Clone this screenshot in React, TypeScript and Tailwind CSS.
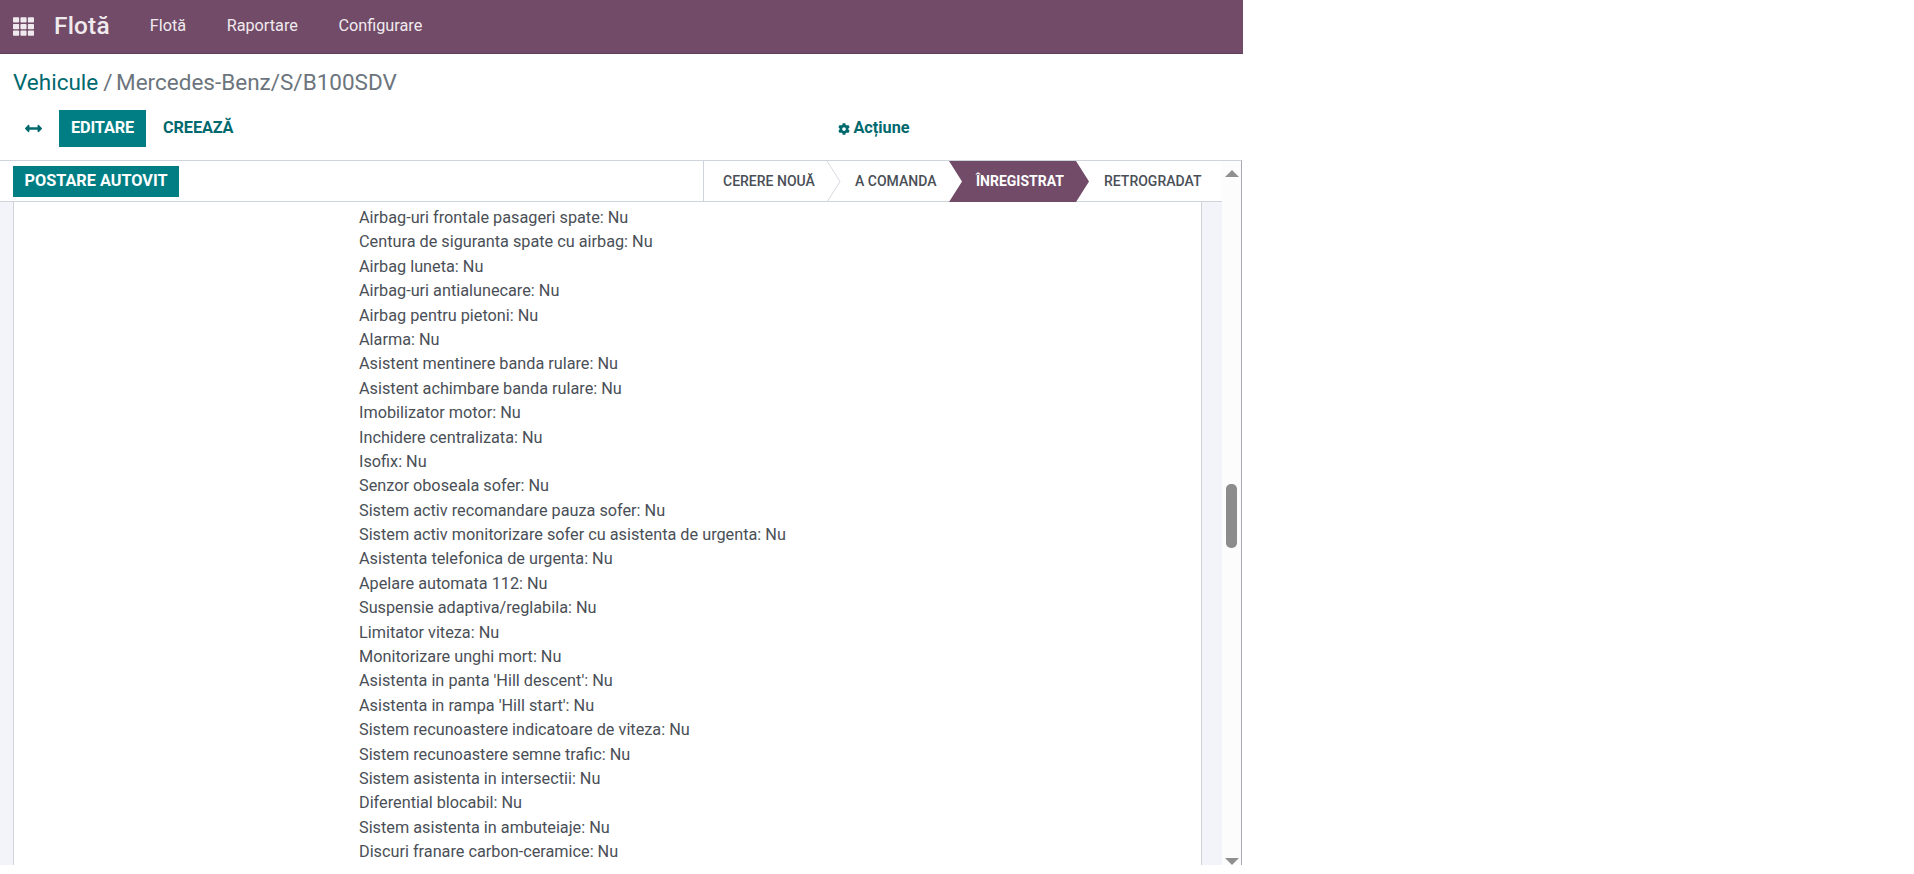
import { FaArrowsAltH, FaCog, FaTh } from "react-icons/fa";

const rows = [
  "Airbag-uri frontale pasageri spate: Nu",
  "Centura de siguranta spate cu airbag: Nu",
  "Airbag luneta: Nu",
  "Airbag-uri antialunecare: Nu",
  "Airbag pentru pietoni: Nu",
  "Alarma: Nu",
  "Asistent mentinere banda rulare: Nu",
  "Asistent achimbare banda rulare: Nu",
  "Imobilizator motor: Nu",
  "Inchidere centralizata: Nu",
  "Isofix: Nu",
  "Senzor oboseala sofer: Nu",
  "Sistem activ recomandare pauza sofer: Nu",
  "Sistem activ monitorizare sofer cu asistenta de urgenta: Nu",
  "Asistenta telefonica de urgenta: Nu",
  "Apelare automata 112: Nu",
  "Suspensie adaptiva/reglabila: Nu",
  "Limitator viteza: Nu",
  "Monitorizare unghi mort: Nu",
  "Asistenta in panta 'Hill descent': Nu",
  "Asistenta in rampa 'Hill start': Nu",
  "Sistem recunoastere indicatoare de viteza: Nu",
  "Sistem recunoastere semne trafic: Nu",
  "Sistem asistenta in intersectii: Nu",
  "Diferential blocabil: Nu",
  "Sistem asistenta in ambuteiaje: Nu",
  "Discuri franare carbon-ceramice: Nu",
];

export default function App() {
  return (
    <div className="w-[1243px] h-[865px] flex flex-col overflow-hidden bg-white font-['Roboto',sans-serif] text-[16.25px] text-[#4a4f57]">

      {/* navbar */}
      <header className="h-[54px] shrink-0 flex items-center bg-[#714b67] border-b border-[#5f4058] text-white">
        <FaTh className="ml-[13px] w-[21px] h-[21px] text-[#f0eaee]" />
        <span className="ml-[20px] text-[24.4px] font-medium tracking-[0.2px] text-[#f0eaee]">Flotă</span>
        <nav className="ml-[40px] flex gap-[40.5px] text-[#f0eaee]">
          <span>Flotă</span>
          <span>Raportare</span>
          <span>Configurare</span>
        </nav>
      </header>

      {/* breadcrumb + buttons */}
      <div className="h-[106px] shrink-0 flex flex-col pl-[13px]">
        <div className="mt-[13px] text-[22.5px] leading-[30px] text-[#6c757d]">
          <span className="text-[#00696e]">Vehicule</span>
          <span className="ml-[5px]">/</span>
          <span className="ml-[3.5px]">Mercedes-Benz/S/B100SDV</span>
        </div>
        <div className="mt-[13px] flex items-center">
          <FaArrowsAltH className="ml-[12px] w-[17px] h-[17px] text-[#00696e]" />
          <button className="ml-[17px] w-[87px] h-[37px] bg-[#017e84] text-white font-bold text-[16.25px] tracking-[-0.1px]">EDITARE</button>
          <span className="ml-[17px] font-bold tracking-[-0.1px] text-[#00696e]">CREEAZĂ</span>
          <span className="ml-[605px] flex items-center gap-[3px] font-bold text-[#00696e]">
            <FaCog className="w-[12px] h-[12px]" />
            Acțiune
          </span>
        </div>
      </div>

      {/* scroll area */}
      <div className="flex-1 min-h-0 w-[1242px] flex border-t border-r border-t-[#ced4da] border-r-[#a8a8b0]">
        <div className="flex-1 min-w-0 flex flex-col">

          {/* statusbar */}
          <div className="h-[41px] shrink-0 flex items-center justify-between pl-[13px] border-b border-[#ced4da]">
            <button className="w-[166px] h-[31px] bg-[#017e84] text-white font-bold text-[16.25px]">POSTARE AUTOVIT</button>
            <div className="relative h-full w-[519px] flex items-center border-l border-[#ced4da] text-[14px] font-medium text-[#4a4f57] uppercase">
              <span className="absolute left-[19px]">Cerere nouă</span>
              <svg className="absolute left-[122px] top-0" width="16" height="41" viewBox="0 0 16 41">
                <path d="M1 0 L14 20.5 L1 41" fill="none" stroke="#d5d8de" />
              </svg>
              <span className="absolute left-[151px]">A comanda</span>
              <svg className="absolute left-[245px] top-0" width="144" height="41" viewBox="0 0 144 41">
                <path d="M0 0 H127 L140 20.5 L127 41 H0 L13 20.5 Z" fill="#714b67" />
              </svg>
              <span className="absolute left-[272px] font-bold text-white">Înregistrat</span>
              <span className="absolute left-[400px]">Retrogradat</span>
            </div>
          </div>

          {/* sheet */}
          <div className="flex-1 min-h-0 flex bg-[#f3f4f9]">
            <div className="ml-[13px] mr-[20px] flex-1 min-w-0 overflow-hidden bg-white border-x border-[#ced4da] pt-[4px] pl-[345px]">
              {rows.map((row) => (
                <div key={row} className="h-[24.4px] leading-[24.4px] whitespace-nowrap">{row}</div>
              ))}
            </div>
          </div>
        </div>

        {/* scrollbar */}
        <div className="w-[19px] shrink-0 flex flex-col items-center bg-[#fcfcfc]">
          <svg className="mt-[9px]" width="14" height="7" viewBox="0 0 14 7">
            <path d="M7 0 L14 7 H0 Z" fill="#8f8f8f" />
          </svg>
          <div className="mt-[307px] w-[11px] h-[64px] rounded-[5px] bg-[#8c8c8c]" />
          <svg className="mt-auto" width="14" height="7" viewBox="0 0 14 7">
            <path d="M0 0 H14 L7 7 Z" fill="#8f8f8f" />
          </svg>
        </div>
      </div>
    </div>
  );
}
